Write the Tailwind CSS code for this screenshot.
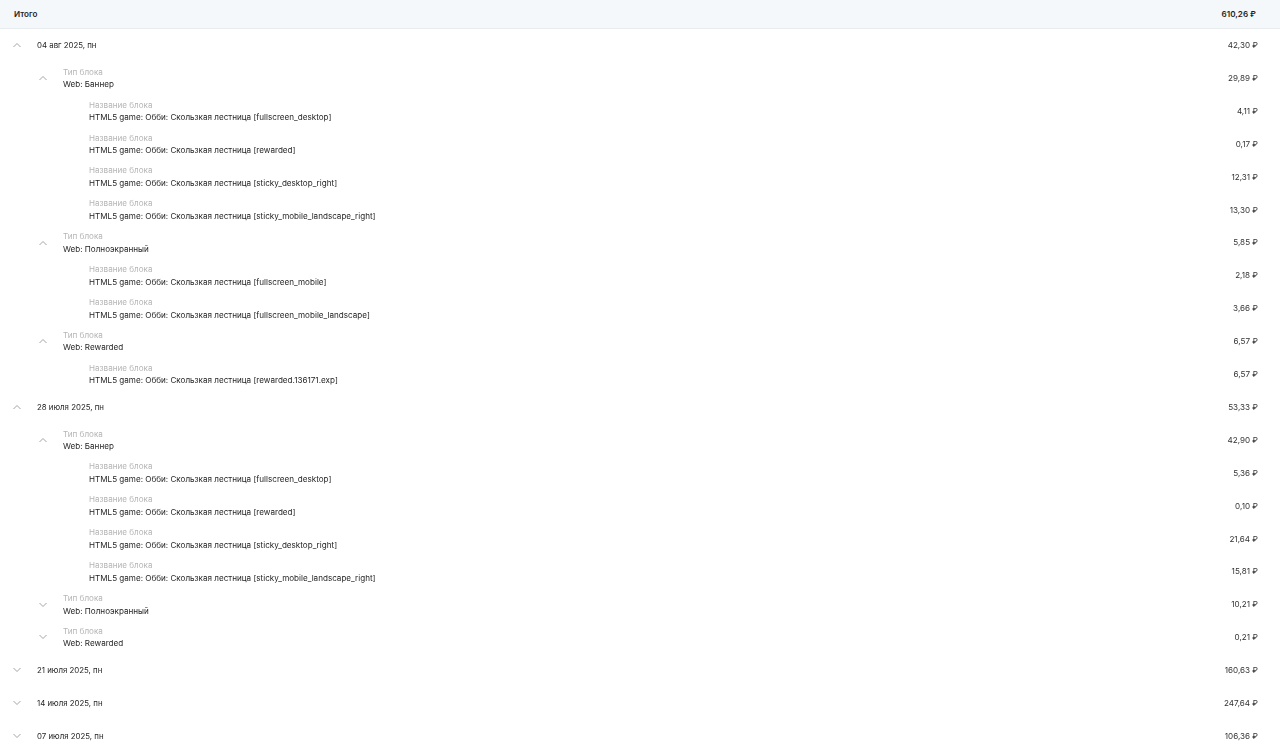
<!DOCTYPE html>
<html lang="en">
<head>
  <meta charset="UTF-8" />
  <title>Итого</title>
  <script src="https://cdn.jsdelivr.net/npm/@tailwindcss/browser@4"></script>
</head>
<body class="bg-white text-[#1f1f1f] font-['Inter',sans-serif] text-[8.1px] leading-[12.6px] overflow-hidden">
  <div class="blur-[0.25px]">
    <div class="h-[29px] bg-[#f5f8fa] border-b border-[#e8ebee] flex items-center justify-between pl-[14px] pr-[24px] font-semibold">
      <span>Итого</span><span>610,26 ₽</span>
    </div>
    <div id="rows"></div>
  </div>

  <script>
    const pre = 'HTML5 game: Обби: Скользкая лестница '
    const rows = [
      ['day', '04 авг 2025, пн', '42,30 ₽', 1],
      ['block', 'Web: Баннер', '29,89 ₽', 1],
      ['name', '[fullscreen_desktop]', '4,11 ₽'],
      ['name', '[rewarded]', '0,17 ₽'],
      ['name', '[sticky_desktop_right]', '12,31 ₽'],
      ['name', '[sticky_mobile_landscape_right]', '13,30 ₽'],
      ['block', 'Web: Полноэкранный', '5,85 ₽', 1],
      ['name', '[fullscreen_mobile]', '2,18 ₽'],
      ['name', '[fullscreen_mobile_landscape]', '3,66 ₽'],
      ['block', 'Web: Rewarded', '6,57 ₽', 1],
      ['name', '[rewarded.136171.exp]', '6,57 ₽'],
      ['day', '28 июля 2025, пн', '53,33 ₽', 1],
      ['block', 'Web: Баннер', '42,90 ₽', 1],
      ['name', '[fullscreen_desktop]', '5,36 ₽'],
      ['name', '[rewarded]', '0,10 ₽'],
      ['name', '[sticky_desktop_right]', '21,64 ₽'],
      ['name', '[sticky_mobile_landscape_right]', '15,81 ₽'],
      ['block', 'Web: Полноэкранный', '10,21 ₽', 0],
      ['block', 'Web: Rewarded', '0,21 ₽', 0],
      ['day', '21 июля 2025, пн', '160,63 ₽', 0],
      ['day', '14 июля 2025, пн', '247,64 ₽', 0],
      ['day', '07 июля 2025, пн', '106,36 ₽', 0],
    ]

    function chevron(open) {
      const d = open ? 'M1.5 6 L5 2.5 L8.5 6' : 'M1.5 2 L5 5.5 L8.5 2'
      return `<svg class="w-[10px] h-[8px] shrink-0" viewBox="0 0 10 8" fill="none" stroke="#9a9a9a" stroke-width="0.9"><path d="${d}"/></svg>`
    }

    document.getElementById('rows').innerHTML = rows.map(([type, text, value, open]) => {
      let left
      if (type === 'day') {
        left = `<div class="flex items-center pl-[12px] gap-[15px]">${chevron(open)}<span class="text-[7.85px]">${text}</span></div>`
      } else if (type === 'block') {
        left = `<div class="flex items-center pl-[38px] gap-[15px]">${chevron(open)}<div><div class="text-[#b5b5b5]">Тип блока</div><div>${text}</div></div></div>`
      } else {
        left = `<div class="pl-[89px]"><div class="text-[#b5b5b5]">Название блока</div><div>${pre}${text}</div></div>`
      }
      return `<div class="h-[32.9px] flex items-center justify-between pr-[22px]">${left}<span class="text-[#333333]">${value}</span></div>`
    }).join('')
  </script>
</body>
</html>
